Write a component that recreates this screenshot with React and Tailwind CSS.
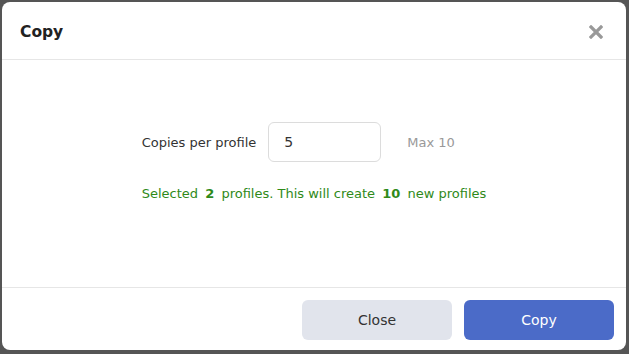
import React, { useState } from 'react';

function CopyDialog() {
  const [copies, setCopies] = useState('5');
  const selected = 2;
  const total = selected * (parseInt(copies, 10) || 0);

  return (
    <div className="w-[629px] h-[354px] bg-[#555555] pt-[2px] pl-[2px] pr-[3px] pb-[4px] font-['DejaVu_Sans',Verdana,sans-serif]">
      <div className="h-full bg-white rounded-lg flex flex-col overflow-hidden">
        <div className="h-[58px] shrink-0 pl-[18px] pr-5 flex items-center justify-between border-b border-[#e6e6e6]">
          <h2 className="text-[15.5px] font-bold text-[#222] pt-[5px]">Copy</h2>
          <button className="mr-[3px] mt-[2px] text-[#999]">
            <svg width="14" height="14" viewBox="0 0 14 14">
              <path d="M2 2 L12 12 M12 2 L2 12" stroke="currentColor" strokeWidth="3.2" strokeLinecap="square" />
            </svg>
          </button>
        </div>

        <div className="flex-1 flex flex-col items-center pt-[62px]">
          <div className="flex flex-col items-start">
            <div className="flex items-center text-[13px]">
              <span className="text-[#333] pt-[2px]">Copies per profile</span>
              <input
                value={copies}
                onChange={(e) => setCopies(e.target.value)}
                className="ml-3 w-[113px] h-[40px] border border-[#dcdcdc] rounded-md px-[15px] text-[14px] text-[#333] outline-none"
              />
              <span className="ml-[26px] text-[#999] pt-[2px]">Max 10</span>
            </div>
            <p className="mt-[22px] text-[13px] text-[#2f8a19]">
              Selected <b className="mx-[3px]">{selected}</b> profiles. This will create <b className="mx-[3px]">{total}</b> new profiles
            </p>
          </div>
        </div>

        <div className="h-[63px] shrink-0 border-t border-[#e6e6e6] flex justify-end items-start gap-3 pt-3 pr-3">
          <button className="w-[150px] h-[40px] rounded-md bg-[#e1e4ec] text-[#333] text-[14px]">Close</button>
          <button className="w-[150px] h-[40px] rounded-md bg-[#4b6bc8] text-white text-[14px]">Copy</button>
        </div>
      </div>
    </div>
  );
}

export default function App() {
  return <CopyDialog />;
}
